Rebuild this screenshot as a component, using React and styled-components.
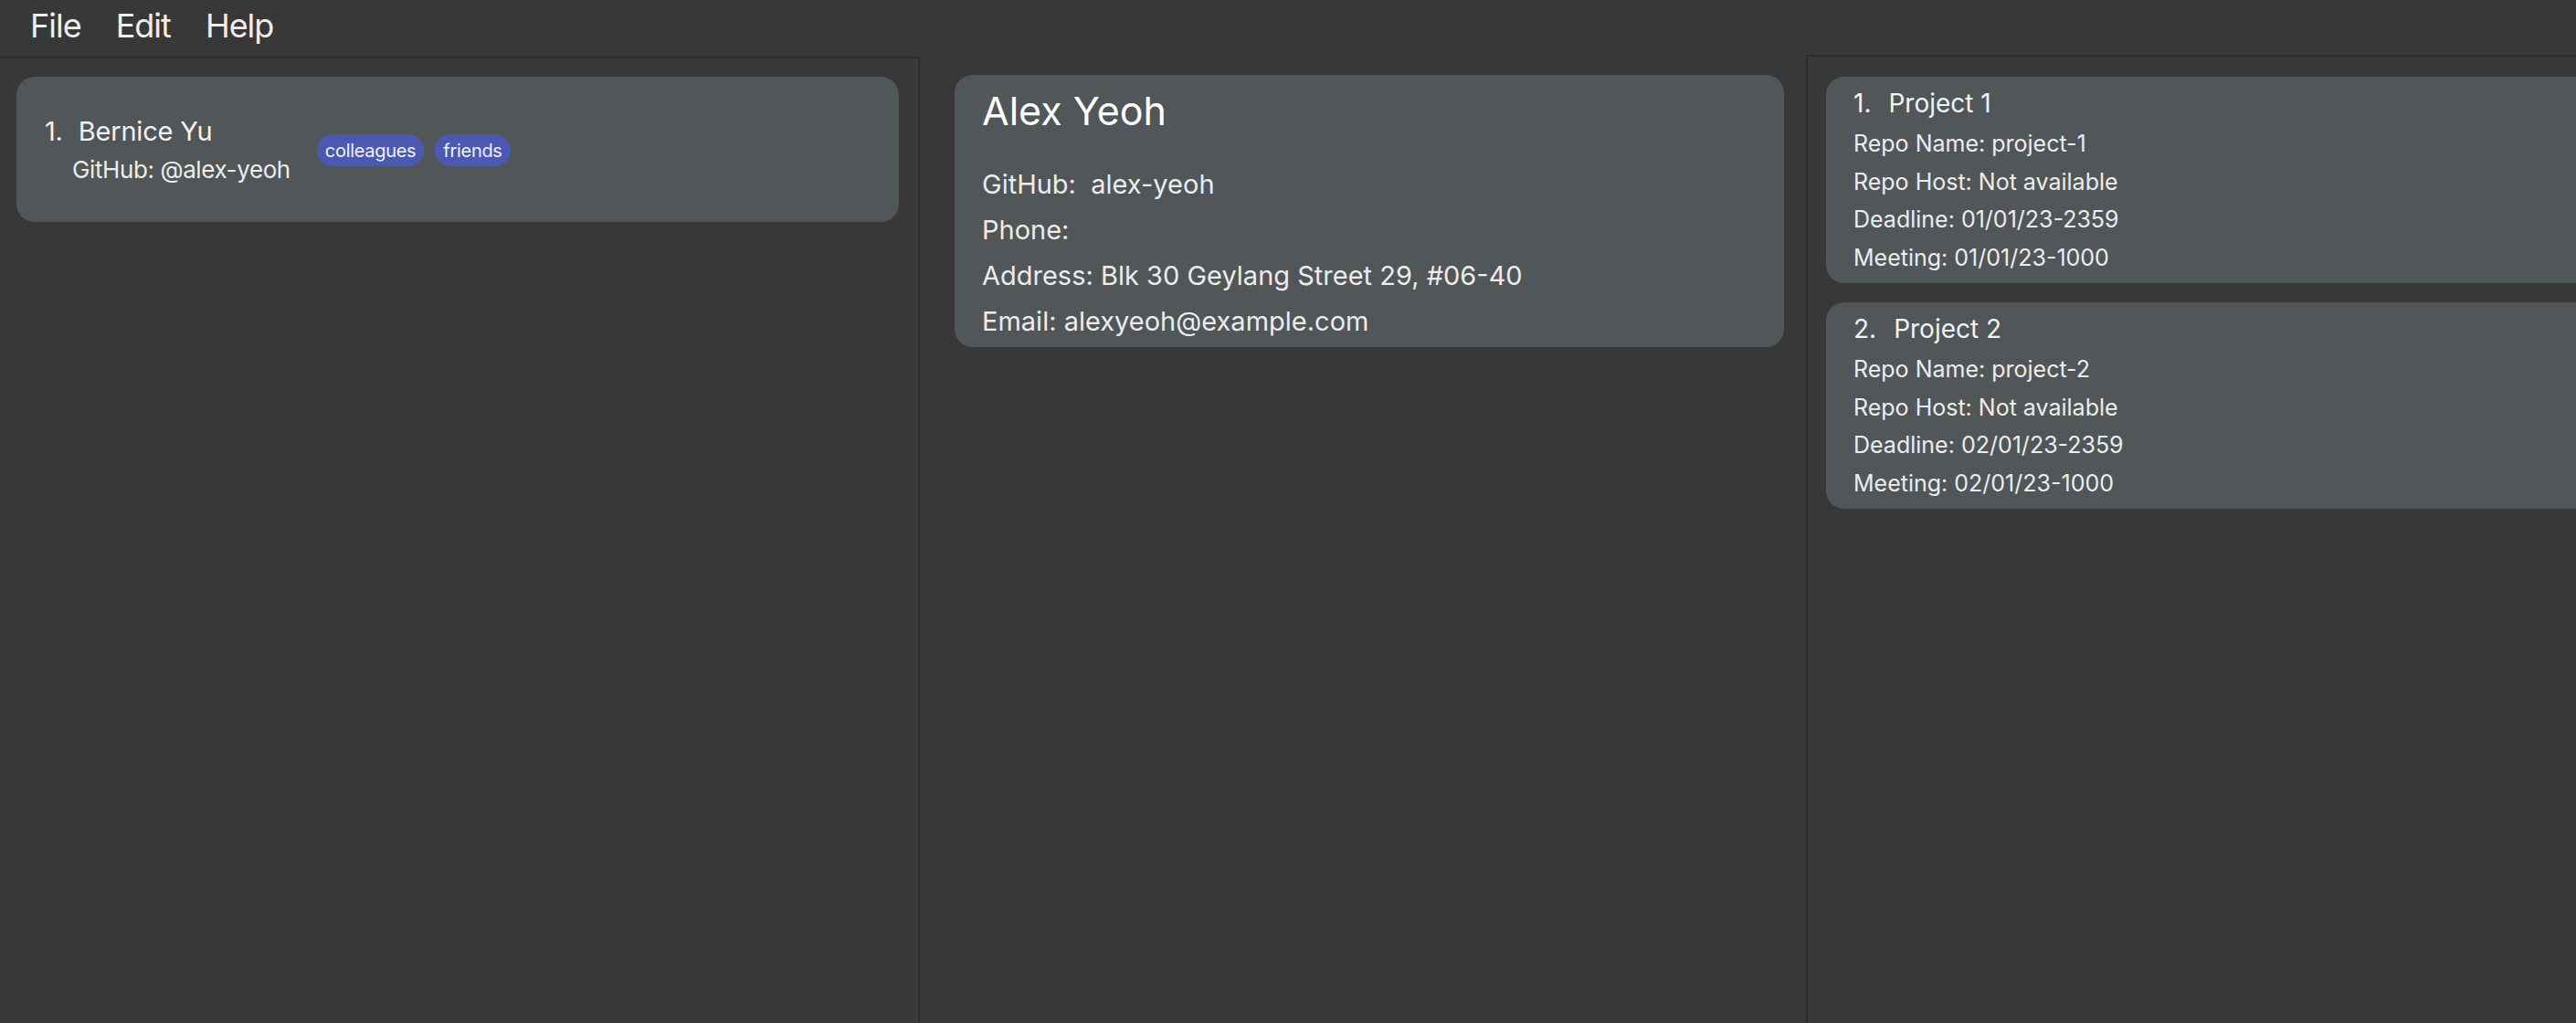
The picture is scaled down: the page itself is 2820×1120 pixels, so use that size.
import React from 'react';
import styled, { createGlobalStyle } from 'styled-components';

const GlobalStyle = createGlobalStyle`
    html, body {
        margin: 0;
        padding: 0;
        background: #383838;
        overflow: hidden;
    }
    body {
        font-family: Inter, "Noto Sans", sans-serif;
        color: #f0f0f0;
    }
`;

const Window = styled.div`
    display: flex;
    flex-direction: column;
    width: 100vw;
    height: 100vh;
    background: #383838;
    overflow: hidden;
`;

const MenuBar = styled.div`
    display: flex;
    align-items: flex-start;
    height: 62px;
    padding-left: 14px;
    flex-shrink: 0;
`;

const MenuItem = styled.div`
    padding: 0 19px;
    font-size: 36px;
    letter-spacing: -1px;
    color: #eeeeee;
    line-height: 56px;
`;

const Body = styled.div`
    display: flex;
    flex: 1;
    min-height: 0;
`;

const Pane = styled.div`
    display: flex;
    flex-direction: column;
    gap: ${props => props.gap || 0}px;
    box-sizing: border-box;
    width: ${props => props.width ? `${props.width}px` : 'auto'};
    flex: ${props => props.width ? '0 0 auto' : '1'};
    min-width: 0;
    overflow: hidden;
    padding: ${props => props.pad};
    border-top: ${props => props.framed ? '2px solid #2b2b2b' : 'none'};
`;

const LeftPane = styled(Pane)`
    border-right: 2px solid #2b2b2b;
    box-shadow: inset -2px 0 0 #3e3e3e;
`;

const RightPane = styled(Pane)`
    margin-top: -2px;
    border-left: 2px solid #2b2b2b;
`;

const Card = styled.div`
    background: #515659;
    border-radius: 20px;
    box-sizing: border-box;
`;

const PersonCard = styled(Card)`
    display: flex;
    align-items: center;
    gap: 29px;
    height: 159px;
    padding: 0 31px;
`;

const NameBlock = styled.div`
    display: flex;
    flex-direction: column;
    gap: 9px;
`;

const NameLine = styled.div`
    font-size: 29px;
    line-height: 35px;
    letter-spacing: -0.2px;
    color: #f2f2f2;
`;

const Index = styled.span`
    margin-right: 17px;
`;

const SubLine = styled.div`
    font-size: 26px;
    line-height: 31px;
    letter-spacing: -0.4px;
    padding-left: 30px;
    color: #ececec;
`;

const Tags = styled.div`
    display: flex;
    gap: 12px;
    margin-top: 2px;
`;

const Tag = styled.span`
    display: inline-flex;
    align-items: center;
    height: 35px;
    padding: 0 9px;
    border-radius: 17px;
    background: #4b59b2;
    color: #f2f2f2;
    font-size: 20px;
    letter-spacing: -0.3px;
`;

const DetailCard = styled(Card)`
    padding: 13px 30px 3px;
`;

const DetailName = styled.div`
    font-size: 43px;
    line-height: 52px;
    color: #ffffff;
    margin-bottom: 30px;
`;

const DetailLine = styled.div`
    font-size: 29px;
    line-height: 50px;
    color: #ececec;
    white-space: pre;
`;

const ProjectCard = styled(Card)`
    width: calc(100% + 80px);
    padding: 12px 30px 7px;
`;

const ProjectTitle = styled.div`
    font-size: 28px;
    line-height: 34px;
    color: #f2f2f2;
    margin-bottom: 7px;
`;

const ProjectIndex = styled.span`
    margin-right: 19px;
`;

const ProjectLine = styled.div`
    font-size: 25px;
    line-height: 41.5px;
    color: #ececec;
`;

const projects = [
    { name: 'Project 1', repo: 'project-1', host: 'Not available', deadline: '01/01/23-2359', meeting: '01/01/23-1000' },
    { name: 'Project 2', repo: 'project-2', host: 'Not available', deadline: '02/01/23-2359', meeting: '02/01/23-1000' },
];

const App = () => {
    return (
        <Window>
            <GlobalStyle />
            <MenuBar>
                <MenuItem>File</MenuItem>
                <MenuItem>Edit</MenuItem>
                <MenuItem>Help</MenuItem>
            </MenuBar>
            <Body>
                <LeftPane width={1007} pad="20px 21px 0 18px" framed>
                    <PersonCard>
                        <NameBlock>
                            <NameLine><Index>1.</Index>Bernice Yu</NameLine>
                            <SubLine>GitHub: @alex-yeoh</SubLine>
                        </NameBlock>
                        <Tags>
                            <Tag>colleagues</Tag>
                            <Tag>friends</Tag>
                        </Tags>
                    </PersonCard>
                </LeftPane>
                <Pane width={970} pad="20px 24px 0 38px">
                    <DetailCard>
                        <DetailName>Alex Yeoh</DetailName>
                        <DetailLine>GitHub:  alex-yeoh</DetailLine>
                        <DetailLine>Phone: </DetailLine>
                        <DetailLine>Address: Blk 30 Geylang Street 29, #06-40</DetailLine>
                        <DetailLine>Email: alexyeoh@example.com</DetailLine>
                    </DetailCard>
                </Pane>
                <RightPane pad="22px 0 0 20px" gap={21} framed>
                    {projects.map((p, i) => (
                        <ProjectCard key={p.name}>
                            <ProjectTitle><ProjectIndex>{i + 1}.</ProjectIndex>{p.name}</ProjectTitle>
                            <ProjectLine>Repo Name: {p.repo}</ProjectLine>
                            <ProjectLine>Repo Host: {p.host}</ProjectLine>
                            <ProjectLine>Deadline: {p.deadline}</ProjectLine>
                            <ProjectLine>Meeting: {p.meeting}</ProjectLine>
                        </ProjectCard>
                    ))}
                </RightPane>
            </Body>
        </Window>
    );
};

export default App;
